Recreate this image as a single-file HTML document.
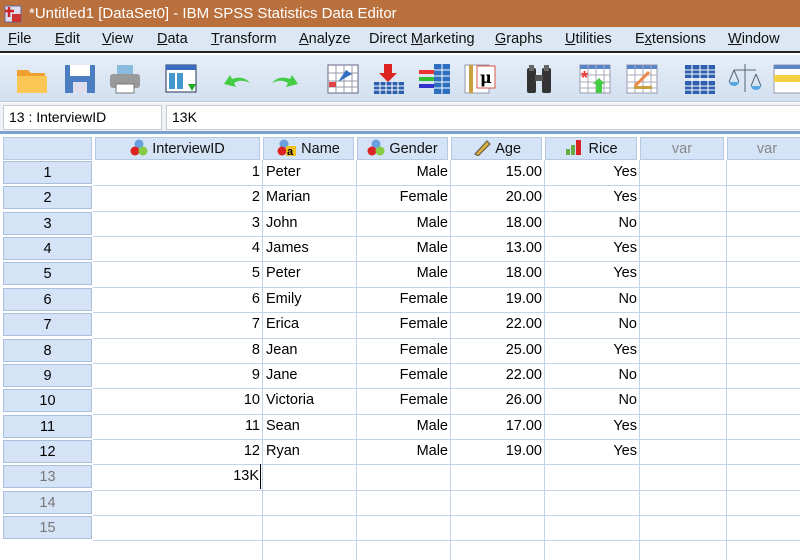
<!DOCTYPE html>
<html><head><meta charset="utf-8"><style>
*{margin:0;padding:0;box-sizing:border-box}
body{width:800px;height:533px;overflow:hidden;background:#fff;font-family:"Liberation Sans",Arial,sans-serif;position:relative}
.a{position:absolute}
#title{left:0;top:0;width:800px;height:27px;background:#b9703d;color:#fff;font-size:15px;line-height:27px;padding-left:29px}
#menu{left:0;top:27px;width:800px;height:26px;background:#dce7f3;border-bottom:2px solid #222;font-size:14.5px;color:#111}
#menu span{position:absolute;top:4px}
#tb{left:0;top:55px;width:800px;height:47px;background:linear-gradient(#e6eef8,#d2e0f0);border-bottom:1px solid #b8c8da}
#ed{left:0;top:103px;width:800px;height:28px;background:#eef2f7}
.box{position:absolute;top:2px;height:25px;background:#fff;border:1px solid #c8ccd2;font-size:14px;line-height:23px;padding-left:5px}
#grid{left:0;top:131px;width:800px;height:402px;background:#fff;border-top:3px solid #7aa2d0}
.h{position:absolute;top:3px;height:23px;background:#d4e3f5;border:1px solid #b5c9e2;font-size:14.5px;text-align:center;line-height:22px;color:#111}
.r{position:absolute;left:3px;width:89px;height:23px;background:#d4e3f5;border:1px solid #a9bfdc;font-size:14.5px;text-align:center;line-height:22px}
.vl{position:absolute;top:26px;width:1px;height:400px;background:#c3d4ea}
.hl{position:absolute;left:93px;width:707px;height:1px;background:#c3d4ea}
.c{position:absolute;font-size:14.5px;line-height:25px;height:25px}
.ic{position:absolute;top:7px;width:34px;height:34px}
</style></head><body>
<div class="a" id="title"><svg class="a" style="left:4px;top:5px" width="18" height="18"><rect x="1" y="1" width="16" height="16" fill="#dde" stroke="#669"/><rect x="8" y="9" width="9" height="8" fill="#c33"/><path d="M5 2v10M1 6h9" stroke="#c22" stroke-width="2.5"/></svg>*Untitled1 [DataSet0] - IBM SPSS Statistics Data Editor</div>
<div class="a" id="menu">
<span style="left:8px"><u>F</u>ile</span><span style="left:55px"><u>E</u>dit</span><span style="left:102px"><u>V</u>iew</span><span style="left:157px"><u>D</u>ata</span><span style="left:211px"><u>T</u>ransform</span><span style="left:299px"><u>A</u>nalyze</span><span style="left:369px">Direct <u>M</u>arketing</span><span style="left:495px"><u>G</u>raphs</span><span style="left:565px"><u>U</u>tilities</span><span style="left:635px">E<u>x</u>tensions</span><span style="left:728px"><u>W</u>indow</span>
</div>
<div class="a" id="tb">
<svg class="ic" style="left:15px" viewBox="0 0 34 34"><path d="M2 8h11l3 3h14v20H2z" fill="#f0a030"/><path d="M2 14h30v17H2z" fill="#fbc655"/></svg>
<svg class="ic" style="left:63px" viewBox="0 0 34 34"><rect x="2" y="3" width="30" height="28" fill="#4a7ec0"/><rect x="7" y="3" width="20" height="11" fill="#fff"/><rect x="10" y="20" width="14" height="11" fill="#dde"/></svg>
<svg class="ic" style="left:108px" viewBox="0 0 34 34"><rect x="9" y="3" width="16" height="10" fill="#8bd"/><rect x="2" y="12" width="30" height="14" rx="3" fill="#999"/><rect x="8" y="22" width="18" height="9" fill="#fff" stroke="#777"/></svg>
<svg class="ic" style="left:164px" viewBox="0 0 34 34"><rect x="2" y="3" width="30" height="27" fill="#fff" stroke="#235"/><rect x="2" y="3" width="30" height="5" fill="#3a6cc0"/><rect x="5" y="11" width="6" height="16" fill="#49c"/><rect x="13" y="11" width="6" height="16" fill="#49c"/><path d="M24 22h8l-4 7z" fill="#2a2"/></svg>
<svg class="ic" style="left:220px" viewBox="0 0 34 34"><path d="M4 22l6-9 2 4c8-3 14-1 18 4-6-3-11-3-16 0l2 4z" fill="#4c4"/></svg>
<svg class="ic" style="left:268px" viewBox="0 0 34 34"><path d="M30 22l-6-9-2 4c-8-3-14-1-18 4 6-3 11-3 16 0l-2 4z" fill="#4c4"/></svg>
<svg class="ic" style="left:326px" viewBox="0 0 34 34"><rect x="2" y="3" width="30" height="28" fill="#fff" stroke="#668"/><path d="M2 11h30M2 19h30M2 25h30M10 3v28M18 3v28M26 3v28" stroke="#99a"/><path d="M12 20l8-12 6 4z" fill="#2f6fc0"/><rect x="3" y="20" width="7" height="5" fill="#d44"/></svg>
<svg class="ic" style="left:372px" viewBox="0 0 34 34"><path d="M12 2h8v9h5l-9 9-9-9h5z" fill="#d22"/><rect x="2" y="20" width="30" height="12" fill="#2f60b0"/><path d="M2 24h30M2 28h30M8 20v12M14 20v12M20 20v12M26 20v12" stroke="#fff"/></svg>
<svg class="ic" style="left:418px" viewBox="0 0 34 34"><rect x="16" y="2" width="16" height="30" fill="#2f6fc0"/><path d="M16 8h16M16 14h16M16 20h16M16 26h16M24 2v30" stroke="#fff"/><rect x="1" y="8" width="15" height="4" fill="#e33"/><rect x="1" y="15" width="15" height="4" fill="#3b3"/><rect x="1" y="22" width="15" height="4" fill="#33c"/></svg>
<svg class="ic" style="left:463px" viewBox="0 0 34 34"><rect x="2" y="3" width="24" height="28" fill="#fff" stroke="#99a"/><rect x="6" y="3" width="4" height="28" fill="#c9a040"/><rect x="14" y="4" width="18" height="22" fill="#fff" stroke="#d54"/><text x="17" y="21" font-size="16" font-family="DejaVu Serif" font-weight="bold">μ</text></svg>
<svg class="ic" style="left:522px" viewBox="0 0 34 34"><rect x="5" y="6" width="9" height="25" rx="2" fill="#333"/><rect x="20" y="6" width="9" height="25" rx="2" fill="#333"/><rect x="7" y="3" width="5" height="6" fill="#666"/><rect x="22" y="3" width="5" height="6" fill="#666"/><rect x="13" y="13" width="8" height="6" fill="#555"/></svg>
<svg class="ic" style="left:578px" viewBox="0 0 34 34"><rect x="2" y="3" width="30" height="28" fill="#fff" stroke="#99a"/><rect x="2" y="3" width="30" height="4" fill="#5a85c8"/><path d="M2 13h30M2 20h30M2 26h30M10 3v28M18 3v28M26 3v28" stroke="#aab"/><text x="3" y="22" font-size="18" fill="#e33" font-weight="bold">*</text><path d="M18 31v-9h-3l6-6 6 6h-3v9z" fill="#4c4"/></svg>
<svg class="ic" style="left:625px" viewBox="0 0 34 34"><rect x="2" y="3" width="30" height="28" fill="#fff" stroke="#99a"/><rect x="2" y="3" width="30" height="4" fill="#5a85c8"/><path d="M2 13h30M2 20h30M2 26h30M10 3v28M18 3v28M26 3v28" stroke="#aab"/><path d="M10 24l14-14" stroke="#e84" stroke-width="3"/><rect x="9" y="24" width="18" height="3" fill="#c9a040"/></svg>
<svg class="ic" style="left:683px" viewBox="0 0 34 34"><rect x="2" y="3" width="30" height="13" fill="#2f60b0"/><rect x="2" y="19" width="30" height="13" fill="#2f60b0"/><path d="M2 8h30M2 12h30M2 24h30M2 28h30M9 3v29M17 3v29M25 3v29" stroke="#fff"/></svg>
<svg class="ic" style="left:728px" viewBox="0 0 34 34"><path d="M17 2v28M6 8h22M6 8l-5 12M6 8l5 12M28 12l-5 12M28 12l5 12" stroke="#567" fill="none"/><path d="M1 20a5 4 0 0 0 10 0zM23 24a5 4 0 0 0 10 0z" fill="#5aa6e0"/></svg>
<svg class="ic" style="left:772px" viewBox="0 0 34 34"><rect x="2" y="3" width="30" height="28" fill="#fff" stroke="#99a"/><rect x="2" y="3" width="30" height="4" fill="#5a85c8"/><rect x="2" y="13" width="30" height="7" fill="#f2d040"/></svg>
</div>
<div class="a" id="ed"><div class="box" style="left:3px;width:159px">13 : InterviewID</div><div class="box" style="left:166px;width:640px">13K</div></div>
<div class="a" id="grid">
<div class="h" style="left:3px;width:89px"></div>
<div class="h" style="left:95px;width:165px"><svg width="18" height="17" style="vertical-align:-3px"><circle cx="9" cy="5" r="4.5" fill="#6aa0e0"/><circle cx="5" cy="12" r="4.5" fill="#d22"/><circle cx="13" cy="12" r="4.5" fill="#8c4"/></svg> InterviewID</div>
<div class="h" style="left:263px;width:91px"><svg width="20" height="17" style="vertical-align:-3px"><circle cx="7" cy="5" r="4.5" fill="#6aa0e0"/><circle cx="5" cy="12" r="4.5" fill="#d22"/><rect x="9" y="7" width="10" height="10" fill="#f0c020"/><text x="10" y="16" font-size="11" font-weight="bold">a</text></svg> Name</div>
<div class="h" style="left:357px;width:91px"><svg width="18" height="17" style="vertical-align:-3px"><circle cx="9" cy="5" r="4.5" fill="#6aa0e0"/><circle cx="5" cy="12" r="4.5" fill="#d22"/><circle cx="13" cy="12" r="4.5" fill="#8c4"/></svg> Gender</div>
<div class="h" style="left:451px;width:91px"><svg width="20" height="17" style="vertical-align:-3px"><path d="M3 15L15 2l3 3L6 17z" fill="#d9b040" stroke="#554"/></svg> Age</div>
<div class="h" style="left:545px;width:92px"><svg width="20" height="17" style="vertical-align:-3px"><rect x="2" y="10" width="4" height="6" fill="#6a4"/><rect x="7" y="6" width="4" height="10" fill="#6a4"/><rect x="12" y="1" width="5" height="15" fill="#d22"/></svg> Rice</div>
<div class="h" style="left:640px;width:84px;color:#888">var</div>
<div class="h" style="left:727px;width:80px;color:#888">var</div>
<div class="vl" style="left:262px"></div><div class="vl" style="left:356px"></div><div class="vl" style="left:450px"></div><div class="vl" style="left:544px"></div><div class="vl" style="left:639px"></div><div class="vl" style="left:726px"></div>
<div id="rows"></div>
</div>
<script>
var d=[[1,"Peter","Male","15.00","Yes"],[2,"Marian","Female","20.00","Yes"],[3,"John","Male","18.00","No"],[4,"James","Male","13.00","Yes"],[5,"Peter","Male","18.00","Yes"],[6,"Emily","Female","19.00","No"],[7,"Erica","Female","22.00","No"],[8,"Jean","Female","25.00","Yes"],[9,"Jane","Female","22.00","No"],[10,"Victoria","Female","26.00","No"],[11,"Sean","Male","17.00","Yes"],[12,"Ryan","Male","19.00","Yes"]];
var h="";
for(var i=0;i<15;i++){var t=26+i*25.36;var tt=Math.round(t);
h+='<div class="r" style="top:'+(tt+1)+'px;'+(i>11?'color:#777':'')+'">'+(i+1)+'</div>';
h+='<div class="hl" style="top:'+(Math.round(t+25.36))+'px"></div>';
if(i<12){var r=d[i];
h+='<div class="c" style="top:'+tt+'px;left:95px;width:165px;text-align:right">'+r[0]+'</div>';
h+='<div class="c" style="top:'+tt+'px;left:266px">'+r[1]+'</div>';
h+='<div class="c" style="top:'+tt+'px;left:357px;width:91px;text-align:right">'+r[2]+'</div>';
h+='<div class="c" style="top:'+tt+'px;left:451px;width:91px;text-align:right">'+r[3]+'</div>';
h+='<div class="c" style="top:'+tt+'px;left:545px;width:92px;text-align:right">'+r[4]+'</div>';}
if(i==12){h+='<div class="c" style="top:'+tt+'px;left:95px;width:166px;text-align:right;border-right:1px solid #000;padding-right:1px">13K</div>';}
}
document.getElementById("rows").innerHTML=h;
</script>
</body></html>
